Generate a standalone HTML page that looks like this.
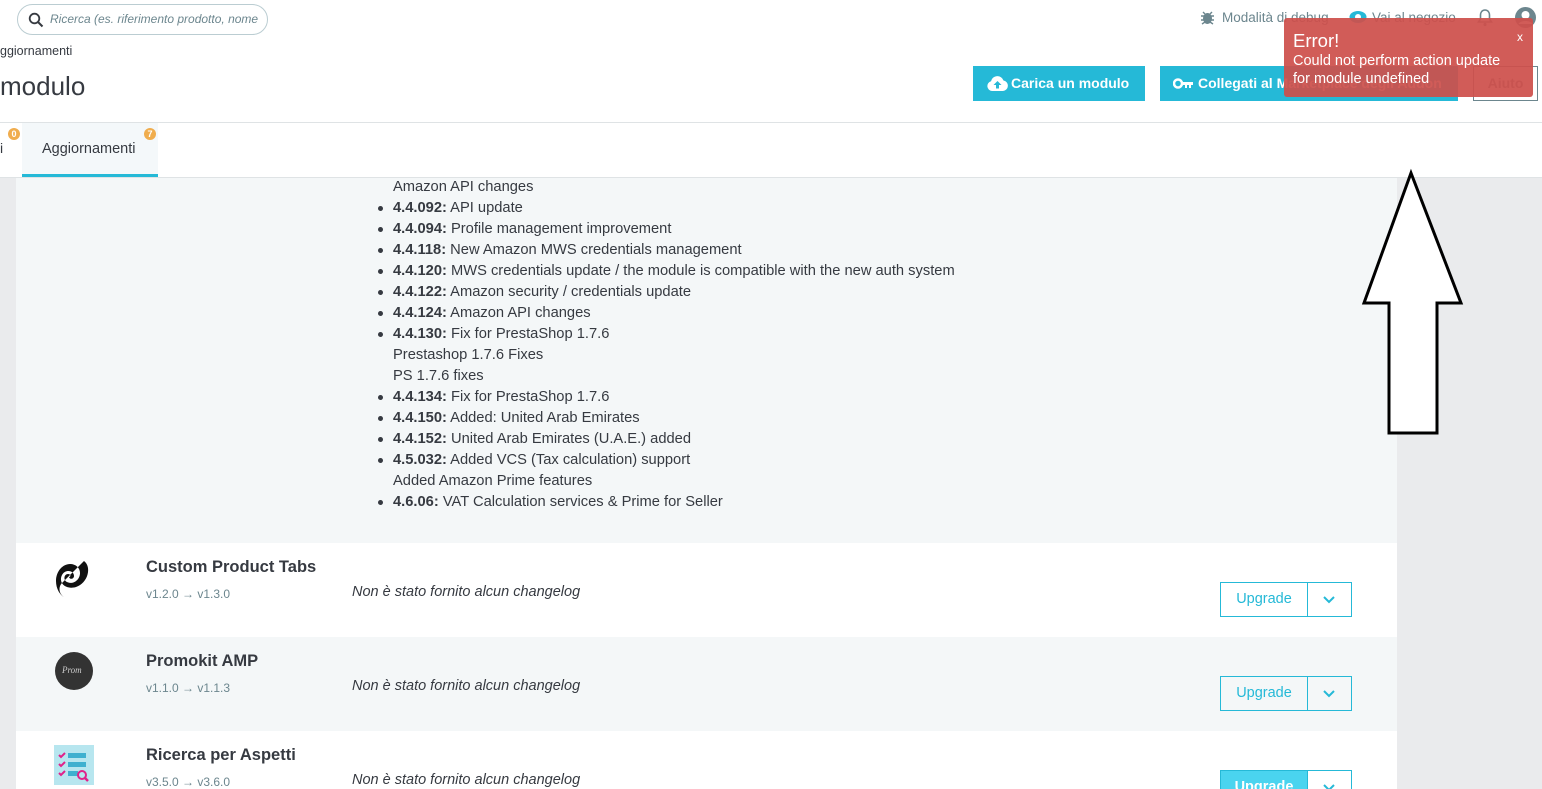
<!DOCTYPE html>
<html><head><meta charset="utf-8"><style>
*{margin:0;padding:0;box-sizing:border-box}
html,body{width:1542px;height:789px;overflow:hidden}
body{background:#fff;font-family:"Liberation Sans",sans-serif;color:#363a41;position:relative}
.abs{position:absolute}
.search{left:17px;top:4px;width:251px;height:31px;border:1px solid #bbcdd2;border-radius:16px}
.search span{position:absolute;left:32px;top:7px;font-size:12px;font-style:italic;color:#6c868e;white-space:nowrap}
.btn{background:#25b9d7;color:#fff;font-weight:bold;font-size:14px;height:35px;line-height:35px;top:66px}
.gray{background:#eaebed}
.lines{left:377px;top:177px;font-size:14.7px;line-height:21px}
.lines div{position:relative;padding-left:16px;white-space:nowrap}
.lines div.b:before{content:"";position:absolute;left:1px;top:8px;width:5px;height:5px;border-radius:50%;background:#363a41}
.row{left:16px;width:1381px;height:94px}
.row .t{position:absolute;left:130px;top:15px;font-size:16.5px;font-weight:bold}
.row .v{position:absolute;left:130px;top:44px;font-size:12px;color:#6c868e}
.row .c{position:absolute;left:336px;top:41px;font-size:14.5px;font-style:italic;color:#363a41}
.up{position:absolute;left:1204px;top:39px;width:132px;height:35px;border:1px solid #25b9d7;color:#25b9d7;font-size:14.5px}
.up span{position:absolute;left:0;width:86px;text-align:center;top:8px}
.up i{position:absolute;left:86px;top:0;bottom:0;border-left:1px solid #25b9d7}
</style></head><body>
<div class="abs search"><svg class="abs" style="left:10px;top:7px" width="16" height="16" viewBox="0 0 16 16"><circle cx="6.5" cy="6.5" r="4.8" fill="none" stroke="#363a41" stroke-width="1.8"/><path d="M10 10l4.5 4.5" stroke="#363a41" stroke-width="2"/></svg><span>Ricerca (es. riferimento prodotto, nome</span></div>
<div class="abs" style="left:0;top:44px;font-size:12.5px">ggiornamenti</div>
<div class="abs" style="left:0;top:71px;font-size:26px">modulo</div>
<svg class="abs" style="left:1200px;top:10px" width="15" height="15" viewBox="0 0 15 15"><ellipse cx="7.5" cy="8.5" rx="4.5" ry="5.5" fill="#6c868e"/><path d="M1 6h13M1 10h13M2 14l3-2M13 14l-3-2M3 2l2 2M12 2l-2 2" stroke="#6c868e" stroke-width="1.4"/></svg>
<div class="abs" style="left:1222px;top:10px;font-size:13.5px;color:#6c868e">Modalità di debug</div>
<svg class="abs" style="left:1349px;top:10px" width="18" height="14" viewBox="0 0 18 14"><ellipse cx="9" cy="7" rx="8.5" ry="6" fill="#25b9d7"/><circle cx="9" cy="7" r="3" fill="#fff"/></svg>
<div class="abs" style="left:1372px;top:10px;font-size:13.5px;color:#6c868e">Vai al negozio</div>
<svg class="abs" style="left:1476px;top:8px" width="18" height="19" viewBox="0 0 18 19"><path d="M9 2c-3 0-4.5 2.5-4.5 5v4l-2 3h13l-2-3V7C13.5 4.5 12 2 9 2z" fill="none" stroke="#6c868e" stroke-width="1.6"/><circle cx="9" cy="16.5" r="1.6" fill="#6c868e"/></svg>
<svg class="abs" style="left:1515px;top:7px" width="21" height="21" viewBox="0 0 21 21"><circle cx="10.5" cy="10.5" r="10.5" fill="#6c868e"/><circle cx="10.5" cy="8" r="4" fill="#fff"/><path d="M3.5 17c2-4 12-4 14 0" fill="#fff"/></svg>
<div class="abs btn" style="left:973px;width:172px"><svg class="abs" style="left:14px;top:10px" width="21" height="15" viewBox="0 0 21 15"><path d="M5 15a5 5 0 0 1-1-9.8A6.5 6.5 0 0 1 16.5 4.5 5.3 5.3 0 0 1 16 15z" fill="#fff"/><path d="M10.5 5l-4 4h2.5v3.5h3V9h2.5z" fill="#25b9d7"/></svg><span style="position:absolute;left:38px">Carica un modulo</span></div>
<div class="abs btn" style="left:1160px;width:298px"><svg class="abs" style="left:13px;top:12px" width="20" height="11" viewBox="0 0 20 11"><circle cx="5" cy="5.5" r="4" fill="none" stroke="#fff" stroke-width="2.5"/><path d="M9 4h11v3h-2v3h-2V7h-2v3h-2V7H9z" fill="#fff"/></svg><span style="position:absolute;left:38px">Collegati al Marketplace degli Addon</span></div>
<div class="abs" style="left:1473px;top:66px;width:65px;height:35px;border:1px solid #6c868e;color:#6c868e;font-size:14px;font-weight:bold;text-align:center;line-height:33px">Aiuto</div>
<div class="abs" style="left:1284px;top:18px;width:249px;height:79px;background:rgba(205,80,75,.93);border-radius:3px;color:#fff">
<div class="abs" style="left:9px;top:12px;font-size:18.5px">Error!</div>
<div class="abs" style="right:10px;top:12px;font-size:12px">x</div>
<div class="abs" style="left:9px;top:34px;font-size:14.5px;line-height:18px;white-space:nowrap">Could not perform action update<br>for module undefined</div></div>
<div class="abs" style="left:0;top:122px;width:1542px;height:1px;background:#dfe3e5"></div>
<div class="abs" style="left:0;top:140px;font-size:14px">i</div>
<div class="abs" style="left:8px;top:128px;width:12px;height:12px;border-radius:50%;background:#f0ad4e;color:#fff;font-size:9px;text-align:center;line-height:12px;font-weight:bold">0</div>
<div class="abs" style="left:22px;top:123px;width:136px;height:54px;background:#f4f8fa;border-bottom:3px solid #25b9d7"><div class="abs" style="left:20px;top:18px;font-size:14.5px">Aggiornamenti</div></div>
<div class="abs" style="left:144px;top:128px;width:12px;height:12px;border-radius:50%;background:#f0ad4e;color:#fff;font-size:9px;text-align:center;line-height:12px;font-weight:bold">7</div>
<div class="abs" style="left:0;top:177px;width:1542px;height:1px;background:#dfe3e5"></div>
<div class="abs gray" style="left:0;top:178px;width:16px;height:611px"></div>
<div class="abs gray" style="left:1397px;top:178px;width:145px;height:611px"></div>
<div class="abs" style="left:16px;top:178px;width:1381px;height:365px;background:#f4f7f8"></div>
<div class="abs lines">
<div>Amazon API changes</div>
<div class="b"><b>4.4.092:</b> API update</div>
<div class="b"><b>4.4.094:</b> Profile management improvement</div>
<div class="b"><b>4.4.118:</b> New Amazon MWS credentials management</div>
<div class="b"><b>4.4.120:</b> MWS credentials update / the module is compatible with the new auth system</div>
<div class="b"><b>4.4.122:</b> Amazon security / credentials update</div>
<div class="b"><b>4.4.124:</b> Amazon API changes</div>
<div class="b"><b>4.4.130:</b> Fix for PrestaShop 1.7.6</div>
<div>Prestashop 1.7.6 Fixes</div>
<div>PS 1.7.6 fixes</div>
<div class="b"><b>4.4.134:</b> Fix for PrestaShop 1.7.6</div>
<div class="b"><b>4.4.150:</b> Added: United Arab Emirates</div>
<div class="b"><b>4.4.152:</b> United Arab Emirates (U.A.E.) added</div>
<div class="b"><b>4.5.032:</b> Added VCS (Tax calculation) support</div>
<div>Added Amazon Prime features</div>
<div class="b"><b>4.6.06:</b> VAT Calculation services &amp; Prime for Seller</div>
</div>
<div class="abs row" style="top:543px;background:#fff">
<svg class="abs" style="left:38px;top:16px" width="40" height="40" viewBox="0 0 40 40"><path d="M30 2c8 6 4 22-8 26-10 3-18-4-14-12 3-6 12-5 12 1 0 3-4 4-5 1 2 0 2-3-1-3-4 0-5 6-1 8 6 3 13-2 13-9 0-5-4-9-10-9C9 5 2 12 2 22c0 8 4 14 8 16-5-3-6-10-2-14" fill="#111"/></svg>
<div class="t">Custom Product Tabs</div><div class="v">v1.2.0 → v1.3.0</div><div class="c">Non è stato fornito alcun changelog</div>
<div class="up"><span>Upgrade</span><i></i><svg class="abs" style="left:102px;top:13px" width="12" height="8" viewBox="0 0 12 8"><path d="M1 1l5 5 5-5" fill="none" stroke="#25b9d7" stroke-width="2"/></svg></div></div>
<div class="abs row" style="top:637px;background:#f4f7f8">
<svg class="abs" style="left:38px;top:14px" width="40" height="40" viewBox="0 0 40 40"><circle cx="20" cy="20" r="19" fill="#333"/><text x="8" y="22" font-size="9" fill="#ccc" font-style="italic" font-family="Liberation Serif">Prom</text></svg>
<div class="t">Promokit AMP</div><div class="v">v1.1.0 → v1.1.3</div><div class="c">Non è stato fornito alcun changelog</div>
<div class="up"><span>Upgrade</span><i></i><svg class="abs" style="left:102px;top:13px" width="12" height="8" viewBox="0 0 12 8"><path d="M1 1l5 5 5-5" fill="none" stroke="#25b9d7" stroke-width="2"/></svg></div></div>
<div class="abs row" style="top:731px;height:58px;background:#fff">
<svg class="abs" style="left:38px;top:14px" width="40" height="40" viewBox="0 0 40 40"><rect width="40" height="40" fill="#b7e6ef"/><rect x="14" y="8" width="18" height="5" fill="#3fb0cf"/><rect x="14" y="17" width="18" height="5" fill="#3fb0cf"/><rect x="14" y="26" width="10" height="5" fill="#3fb0cf"/><path d="M5 10l2 2 4-4M5 19l2 2 4-4M5 28l2 2 4-4" stroke="#e0218a" stroke-width="2" fill="none"/><circle cx="28" cy="30" r="4" fill="none" stroke="#e0218a" stroke-width="2"/><path d="M31 33l3 3" stroke="#e0218a" stroke-width="2.5"/></svg>
<div class="t">Ricerca per Aspetti</div><div class="v">v3.5.0 → v3.6.0</div><div class="c">Non è stato fornito alcun changelog</div>
<div class="up" style="height:40px"><span style="background:#4ad4ef;color:#fff;top:0;height:100%;padding-top:8px;font-weight:bold">Upgrade</span><i></i><svg class="abs" style="left:102px;top:13px" width="12" height="8" viewBox="0 0 12 8"><path d="M1 1l5 5 5-5" fill="none" stroke="#25b9d7" stroke-width="2"/></svg></div></div>
<svg class="abs" style="left:1360px;top:168px" width="105" height="270" viewBox="0 0 105 270"><path d="M51 5L4 135H29V265H77V135H101Z" fill="#fff" stroke="#000" stroke-width="3"/></svg>
</body></html>
